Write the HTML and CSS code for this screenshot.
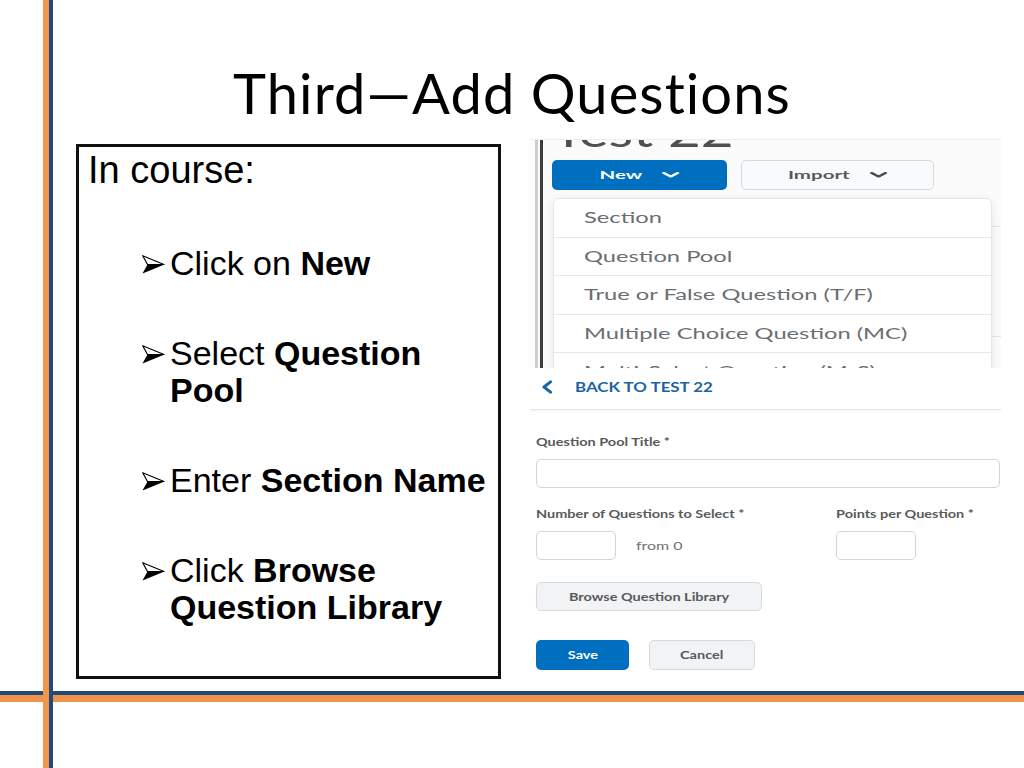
FILE: index.html
```html
<!DOCTYPE html>
<html>
<head>
<meta charset="utf-8">
<title>Third—Add Questions</title>
<link rel="stylesheet" href="styles.css">
</head>
<body>
<div class="slide">
  <div class="vrail"></div>
  <div class="main">
    <h1 class="title">Third—Add Questions</h1>
    <div class="row">
      <div class="box">
        <p class="intro">In course:</p>
        <ul class="steps">
          <li class="step"><span class="arrow"><svg width="23" height="19" viewBox="0 0 23 19"><polygon points="0.7,0.7 22,9.5 5.5,9.5" fill="#fff" stroke="#000" stroke-width="1.2" stroke-linejoin="round"/><polygon points="0.5,18.5 22.5,9.5 5.5,9.5" fill="#000"/></svg></span><span class="st">Click on <b>New</b></span></li>
          <li class="step"><span class="arrow"><svg width="23" height="19" viewBox="0 0 23 19"><polygon points="0.7,0.7 22,9.5 5.5,9.5" fill="#fff" stroke="#000" stroke-width="1.2" stroke-linejoin="round"/><polygon points="0.5,18.5 22.5,9.5 5.5,9.5" fill="#000"/></svg></span><span class="st">Select <b>Question Pool</b></span></li>
          <li class="step"><span class="arrow"><svg width="23" height="19" viewBox="0 0 23 19"><polygon points="0.7,0.7 22,9.5 5.5,9.5" fill="#fff" stroke="#000" stroke-width="1.2" stroke-linejoin="round"/><polygon points="0.5,18.5 22.5,9.5 5.5,9.5" fill="#000"/></svg></span><span class="st">Enter <b>Section Name</b></span></li>
          <li class="step"><span class="arrow"><svg width="23" height="19" viewBox="0 0 23 19"><polygon points="0.7,0.7 22,9.5 5.5,9.5" fill="#fff" stroke="#000" stroke-width="1.2" stroke-linejoin="round"/><polygon points="0.5,18.5 22.5,9.5 5.5,9.5" fill="#000"/></svg></span><span class="st">Click <b>Browse Question Library</b></span></li>
        </ul>
      </div>
      <div class="shots">
        <div class="shot-top">
          <div class="f1">
            <div class="f2">
              <div class="ttl"><span class="ttl-text">Test 22</span></div>
              <div class="btns">
                <div class="btn-new"><span class="bc"><span>New</span><svg width="9" height="6" viewBox="0 0 9 6"><polyline points="1,1 4.5,4.6 8,1" fill="none" stroke="#fff" stroke-width="1.8" stroke-linecap="round" stroke-linejoin="round"/></svg></span></div>
                <div class="btn-imp"><span class="bc"><span>Import</span><svg width="9" height="6" viewBox="0 0 9 6"><polyline points="1,1 4.5,4.6 8,1" fill="none" stroke="#494c4e" stroke-width="1.8" stroke-linecap="round" stroke-linejoin="round"/></svg></span></div>
              </div>
              <div class="under"></div>
              <div class="menu">
                <div class="mi"><span class="sx">Section</span></div>
                <div class="mi"><span class="sx">Question Pool</span></div>
                <div class="mi"><span class="sx">True or False Question (T/F)</span></div>
                <div class="mi"><span class="sx">Multiple Choice Question (MC)</span></div>
                <div class="mi"><span class="sx">Multi-Select Question (M-S)</span></div>
              </div>
            </div>
          </div>
        </div>
        <div class="shot-bottom">
          <div class="hdr">
            <svg class="back-ic" width="12" height="14" viewBox="0 0 12 14"><polyline points="9.5,1.8 3,7 9.5,12.2" fill="none" stroke="#1b64a3" stroke-width="3" stroke-linecap="round" stroke-linejoin="round"/></svg>
            <span class="sx back">BACK TO TEST 22</span>
          </div>
          <div class="form">
            <div class="lbl first"><span class="sx">Question Pool Title *</span></div>
            <div class="inp inp-wide"></div>
            <div class="grid2 lbl-row">
              <div class="lbl"><span class="sx">Number of Questions to Select *</span></div>
              <div class="lbl"><span class="sx">Points per Question *</span></div>
            </div>
            <div class="grid2 inp-row">
              <div class="inp-group"><div class="inp inp-sm"></div><span class="sx from">from 0</span></div>
              <div class="inp inp-sm"></div>
            </div>
            <div class="btn-browse"><span class="sx c">Browse Question Library</span></div>
            <div class="actions">
              <div class="btn-save"><span class="sx c">Save</span></div>
              <div class="btn-cancel"><span class="sx c">Cancel</span></div>
            </div>
          </div>
        </div>
      </div>
    </div>
  </div>
  <div class="hrail"></div>
</div>
</body>
</html>
```

FILE: styles.css
```css
* { box-sizing: border-box; }
html, body { margin: 0; padding: 0; background: #fff; }

.slide {
  position: relative;
  width: 1024px;
  height: 768px;
  overflow: hidden;
  background: #fff;
  font-family: "Liberation Sans", Arial, sans-serif;
  color: #000;
}

.vrail {
  position: absolute;
  left: 43px;
  top: 0;
  bottom: 0;
  width: 10px;
  border-left: 6px solid #f0964a;
  background: #26497d;
  z-index: 2;
}

.main {
  height: 691px;
  overflow: hidden;
}

.hrail {
  height: 11px;
  border-top: 4px solid #24477a;
  background: #f0934a;
}

.title {
  margin: 0;
  padding-top: 60px;
  height: 126px;
  font-family: Lato, "Open Sans", sans-serif;
  font-weight: 400;
  font-size: 56px;
  letter-spacing: 1.1px;
  line-height: 66px;
  text-align: center;
  color: #000;
}

.row {
  display: flex;
  align-items: flex-start;
  margin-top: 13px;
}

/* left text box */
.box {
  margin-left: 76px;
  margin-top: 5px;
  width: 425px;
  height: 535px;
  border: 3px solid #111;
  padding: 1px 8px 0 9px;
  flex: none;
}

.intro {
  margin: 0;
  font-size: 38px;
  line-height: 44px;
}

.steps {
  list-style: none;
  margin: 53px 0 0 0;
  padding: 0 0 0 54px;
  display: flex;
  flex-direction: column;
  gap: 53px;
}

.step {
  display: flex;
  font-size: 34px;
  line-height: 37px;
}

.arrow {
  flex: none;
  width: 28px;
  padding-top: 10px;
}
.arrow svg { display: block; }

.st b { font-weight: 700; }

/* screenshots */
.shots {
  margin-left: 29px;
  width: 471px;
  flex: none;
  display: flex;
  flex-direction: column;
  font-family: Lato, "Open Sans", sans-serif;
}

.sx {
  display: inline-block;
  white-space: nowrap;
  transform: scaleX(var(--sx, 1));
  transform-origin: 0 50%;
}
.sx.c { transform-origin: 50% 50%; }

.shot-top {
  height: 229px;
  background: #fbfbfb;
  border-top: 1px solid #eeeeee;
  overflow: hidden;
  clip-path: inset(0);
  padding-left: 5px;
}
.f1 {
  display: flow-root;
  height: 100%;
  border-left: 3px solid #cdcdcd;
  padding-left: 2px;
}
.f2 {
  display: flow-root;
  position: relative;
  height: 100%;
  border-left: 3px solid #3c3c3c;
  padding-left: 9px;
}

/* only the lower edge of the page heading is visible in the crop */
.ttl {
  height: 12px;
  display: flex;
  align-items: flex-start;
  overflow: hidden;
  clip-path: inset(0);
  font-size: 42px;
  color: #4e5153;
}
.ttl-text {
  flex: none;
  margin-top: -14px;
  line-height: 10px;
  white-space: nowrap;
  transform: scaleX(1.35);
  transform-origin: 0 100%;
}

.btns {
  display: flex;
  gap: 14px;
  margin-top: 8px;
}
.btn-new, .btn-imp {
  height: 30px;
  border-radius: 5px;
  display: flex;
  align-items: center;
  justify-content: center;
  font-weight: 700;
  font-size: 10.5px;
}
.btn-new {
  width: 175px;
  background: #006fbf;
  color: #fff;
}
.btn-imp {
  width: 193px;
  background: #f9fafb;
  border: 1px solid #d5dae2;
  color: #565a5c;
}
.bc {
  display: inline-flex;
  align-items: center;
  gap: 10px;
  transform: scaleX(1.95);
}
.bc svg { display: block; }

.under {
  margin-top: 36px;
  margin-left: 3px;
  width: 470px;
  height: 111px;
  border: 1px solid #e2e2e2;
  border-radius: 6px;
  background: #fafafa;
}

.menu {
  position: absolute;
  left: 10px;
  top: 58px;
  width: 439px;
  height: 220px;
  background: #fff;
  border: 1px solid #e3e6ea;
  border-radius: 6px 6px 0 0;
  box-shadow: 0 2px 10px rgba(0, 0, 0, 0.08);
}
.mi {
  height: 38.5px;
  border-bottom: 1px solid #e6e9ed;
  display: flex;
  align-items: center;
  padding-left: 30px;
  font-size: 14.5px;
  color: #6a6e71;
  --sx: 1.635;
}

.shot-bottom {
  height: 324px;
  background: #fff;
  overflow: hidden;
}
.hdr {
  height: 42px;
  padding: 0 0 3px 11px;
  border-bottom: 1px solid #e6e6e6;
  box-shadow: 0 1px 2px rgba(0, 0, 0, 0.05);
  display: flex;
  align-items: center;
}
.back-ic { display: block; margin-right: 22px; flex: none; }
.back {
  font-weight: 700;
  font-size: 12.5px;
  color: #1b64a3;
  --sx: 1.35;
}

.form {
  padding-left: 6px;
  --sx: 1.38;
}
.lbl {
  height: 14px;
  line-height: 14px;
  font-weight: 700;
  font-size: 10.5px;
  color: #565a5c;
}
.lbl.first { margin-top: 25px; }
.inp {
  height: 29px;
  border: 1px solid #cfd6de;
  border-radius: 5px;
  background: #fff;
}
.inp-wide { width: 464px; margin-top: 10px; }
.grid2 {
  display: grid;
  grid-template-columns: 300px auto;
}
.lbl-row { margin-top: 19px; }
.inp-row { margin-top: 10px; }
.inp-sm { width: 80px; }
.inp-group {
  display: flex;
  align-items: center;
  gap: 20px;
}
.from {
  font-size: 11px;
  color: #6e7376;
  --sx: 1.45;
}

.btn-browse {
  margin-top: 22px;
  width: 226px;
  height: 29px;
  border: 1px solid #d5dae2;
  border-radius: 5px;
  background: #f1f3f5;
  display: flex;
  align-items: center;
  justify-content: center;
  font-weight: 700;
  font-size: 10.5px;
  color: #565a5c;
}

.actions {
  display: flex;
  gap: 20px;
  margin-top: 29px;
}
.btn-save, .btn-cancel {
  height: 30px;
  border-radius: 5px;
  display: flex;
  align-items: center;
  justify-content: center;
  font-weight: 700;
  font-size: 10.5px;
}
.btn-save {
  width: 93px;
  background: #006fbf;
  color: #fff;
}
.btn-cancel {
  width: 106px;
  background: #f1f3f5;
  border: 1px solid #d5dae2;
  color: #565a5c;
}
```
